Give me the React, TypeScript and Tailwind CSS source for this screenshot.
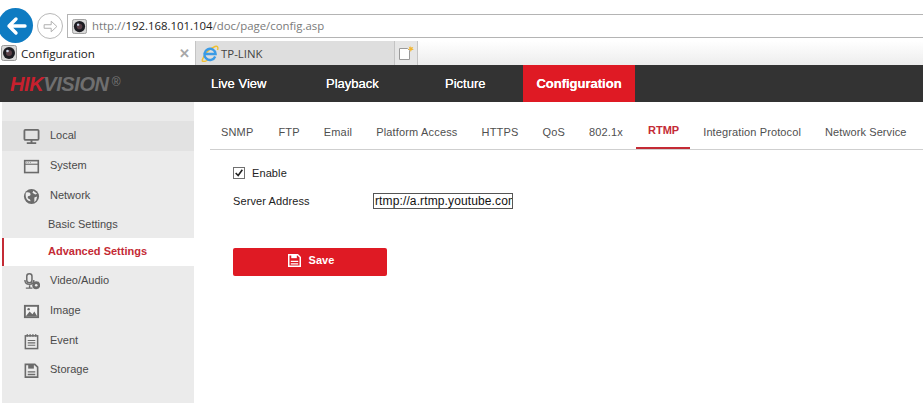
import React from 'react';

const font = { arial: "font-['Liberation_Sans',Arial,sans-serif]" };

const CamIcon: React.FC<{ className?: string }> = ({ className }) => (
  <svg viewBox="0 0 16 16" className={className}>
    <rect x="0.5" y="0.5" width="15" height="15" rx="2" fill="#d8d8d8" stroke="#9a9a9a" />
    <circle cx="8" cy="8" r="6" fill="#1c1c22" />
    <circle cx="8" cy="8" r="3" fill="#5a4048" />
    <circle cx="6.5" cy="6" r="1.3" fill="#c9d3e6" />
  </svg>
);

const IeIcon: React.FC = () => (
  <svg viewBox="0 0 18 18" className="h-[18px] w-[18px]">
    <path d="M1 16.5C3 10.5 8 5 14 2.5c2.5-1 3.5 1 2.5 3.5" fill="none" stroke="#f0c030" strokeWidth="1.4" />
    <path d="M1 16.5c1 1.5 3.5 1 6-0.5" fill="none" stroke="#f0c030" strokeWidth="1.4" />
    <path d="M14.2 12.5a5.6 5.6 0 1 1 .4-2.5H4" fill="none" stroke="#3a9be6" strokeWidth="2.4" />
  </svg>
);

const NewTabIcon: React.FC = () => (
  <svg viewBox="0 0 16 16" className="h-4 w-4">
    <path d="M1.5 3.5h8l2 2v9h-10z" fill="#fff" stroke="#9a9a9a" />
    <path d="M12.5 0.5l.8 2 2-.6-1 1.8 1.6 1.2-2.2.2-.9 1.9-.8-2-2-.2 1.5-1.3-.8-1.9 1.9.8z" fill="#f2b632" />
  </svg>
);

const BrowserBar: React.FC = () => (
  <div className="h-[65px] bg-white">
    <div className="flex h-[41px] items-start">
      <div className="relative z-10 ml-[-2px] mt-[8px] flex h-[35px] w-[35px] shrink-0 items-center justify-center rounded-full bg-[#0e7bc2]">
        <svg viewBox="0 0 24 24" className="h-6 w-6" fill="none" stroke="#fff" strokeWidth="3.4" strokeLinecap="round" strokeLinejoin="round">
          <path d="M21 12H5M12 5l-7 7 7 7" />
        </svg>
      </div>
      <div className="ml-[4px] mt-[13px] flex h-[26px] w-[26px] shrink-0 items-center justify-center rounded-full border border-[#b8b8b8]">
        <svg viewBox="0 0 24 24" className="h-[17px] w-[17px]" fill="none" stroke="#b0b0b0" strokeWidth="1.4" strokeLinejoin="round">
          <path d="M3 9.5h10V4.5L21 12l-8 7.5v-5H3z" />
        </svg>
      </div>
      <div className="ml-[4px] mt-[14px] flex h-[24px] flex-1 items-center border-y border-l border-[#b4b4b4] pl-[4px]">
        <CamIcon className="h-[15px] w-[15px]" />
        <span className="ml-[5px] font-['Open_Sans',sans-serif] text-[11.4px] text-[#7a7a7a]">
          http://<span className="text-[#222]">192.168.101.104</span>/doc/page/config.asp
        </span>
      </div>
    </div>
    <div className="flex h-[24px] bg-gradient-to-b from-white to-[#ededed]">
      <div className="flex w-[195px] items-center bg-white pl-[1px]">
        <CamIcon className="h-4 w-4" />
        <span className="ml-[4px] mt-[2px] flex-1 font-['Open_Sans',sans-serif] text-[11.6px] text-[#222]">Configuration</span>
        <span className="mr-[5px] text-[13px] font-bold leading-none text-[#a8a8a8]">✕</span>
      </div>
      <div className="flex w-[200px] items-center border-x border-[#c4c4c4] bg-[#dedede] pl-[5px]">
        <IeIcon />
        <span className="ml-[2px] mt-[2px] font-['Open_Sans',sans-serif] text-[11.4px] text-[#444]">TP-LINK</span>
      </div>
      <div className="flex w-[23px] items-center justify-center border-r border-[#c4c4c4] bg-[#e6e6e6]">
        <NewTabIcon />
      </div>
    </div>
  </div>
);

const TopNav: React.FC = () => (
  <div className={`flex h-[37px] items-center bg-[#333333] ${font.arial}`}>
    <div className="flex w-[196px] items-start pl-[10px] text-[20px] font-bold italic tracking-[-0.4px]">
      <span className="text-[#c8202e]">HIK</span>
      <span className="text-[#6f6f6f]">VISION</span>
      <span className="ml-[3px] text-[12px] font-normal not-italic leading-[26px] text-[#777]">®</span>
    </div>
    <div className="flex h-full text-[13px] text-white [text-shadow:0_0_0.5px_#fff]">
      <div className="flex w-[115px] items-center pl-[15px]">Live View</div>
      <div className="flex w-[119px] items-center pl-[15px]">Playback</div>
      <div className="flex w-[93px] items-center pl-[15px]">Picture</div>
      <div className="flex w-[112px] items-center justify-center bg-[#df1a24] font-bold">Configuration</div>
    </div>
  </div>
);

const stroke = { fill: 'none', stroke: '#6b6b6b', strokeWidth: 1.6 };

const icons: Record<string, React.ReactNode> = {
  Local: (
    <g {...stroke}>
      <rect x="1.5" y="2" width="15" height="10.5" rx="1" strokeWidth="1.9" />
      <path d="M9 12.5v3M4 16h10" strokeWidth="2" />
    </g>
  ),
  System: (
    <g>
      <rect x="1.8" y="2.8" width="14.4" height="12.6" fill="none" stroke="#6b6b6b" strokeWidth="1.7" />
      <path d="M2 6.6h14" stroke="#6b6b6b" strokeWidth="1.2" />
      <path d="M3.5 4.8h1M5.5 4.8h1M7.5 4.8h1" stroke="#999" strokeWidth="1" />
    </g>
  ),
  Network: (
    <g>
      <circle cx="9" cy="9" r="8" fill="#6b6b6b" />
      <path d="M3 5c3-1 5 0 5 2s-3 1-3 3 3 1 3 4c-3 0-6-3-5-9zM11 3l4 3-2 1-3-2zM12 10l3-1-1 4-2 2z" fill="#ebebeb" />
    </g>
  ),
  'Video/Audio': (
    <g>
      <rect x="4" y="0.8" width="5.5" height="9.5" rx="2.7" fill="none" stroke="#6b6b6b" strokeWidth="1.6" />
      <path d="M2 7.5c0 6 9.5 6 9.5 0M7 13v2.5M3 16h7" fill="none" stroke="#6b6b6b" strokeWidth="1.5" />
      <circle cx="14" cy="13" r="4.2" fill="#6b6b6b" />
      <circle cx="14" cy="13" r="1.4" fill="#ebebeb" />
    </g>
  ),
  Image: (
    <g>
      <rect x="2" y="3" width="14" height="12" fill="#f3f3f3" stroke="#6b6b6b" strokeWidth="2" />
      <path d="M3 14l4-5 3 3 2-3 3 5z" fill="#6b6b6b" />
      <circle cx="6" cy="6.5" r="1.3" fill="#6b6b6b" />
    </g>
  ),
  Event: (
    <g {...stroke}>
      <rect x="2.5" y="3" width="13" height="13.5" />
      <path d="M4.5 1v3M7.5 1v3M10.5 1v3M13.5 1v3" strokeWidth="1.2" />
      <path d="M5 8h8M5 10.5h8M5 13h8" strokeWidth="1.2" />
    </g>
  ),
  Storage: (
    <g>
      <path d="M2.5 2.5h10l3 3v10.5h-13z" fill="none" stroke="#6b6b6b" strokeWidth="1.7" />
      <path d="M5.5 3h6v4h-6z" fill="#6b6b6b" />
      <path d="M5 10.5h8M5 13.2h8" stroke="#6b6b6b" strokeWidth="1.4" />
    </g>
  ),
};

const MenuRow: React.FC<{ label: string; active?: boolean; short?: boolean }> = ({ label, active, short }) => (
  <div className={`flex ${short ? 'h-[29px]' : 'h-[30px]'} items-center pb-[2px] pl-[21px] ${active ? 'bg-[#e2e2e2]' : ''}`}>
    <svg viewBox="0 0 18 18" className="mt-[2px] h-[17px] w-[17px] shrink-0">
      {icons[label]}
    </svg>
    <span className="ml-[10px] text-[11px] text-[#4a4a4a]">{label}</span>
  </div>
);

const Sidebar: React.FC = () => (
  <div className={`ml-[2px] flex w-[192px] flex-col ${font.arial}`}>
    <div className="h-[19px] bg-[#ebebeb]" />
    <div className="bg-[#ebebeb]">
      <MenuRow label="Local" active />
      <MenuRow label="System" />
      <MenuRow label="Network" />
      <div className="flex h-[27px] items-center pl-[46px] text-[11px] text-[#4a4a4a]">Basic Settings</div>
    </div>
    <div className="flex h-[28px] items-center border-l-2 border-[#c42b35] bg-white pb-[2px] pl-[44px] text-[11px] font-bold text-[#c42b35]">
      Advanced Settings
    </div>
    <div className="flex-1 bg-[#ebebeb]">
      <MenuRow label="Video/Audio" />
      <MenuRow label="Image" />
      <MenuRow label="Event" />
      <MenuRow label="Storage" short />
    </div>
  </div>
);

const tabs = [
  { label: 'SNMP', extra: 'pr-[1px]' },
  { label: 'FTP', extra: '' },
  { label: 'Email', extra: '' },
  { label: 'Platform Access', extra: '' },
  { label: 'HTTPS', extra: '' },
  { label: 'QoS', extra: '' },
  { label: '802.1x', extra: '' },
  { label: 'RTMP', extra: '' },
  { label: 'Integration Protocol', extra: 'tracking-[0.12px]' },
  { label: 'Network Service', extra: 'tracking-[0.1px]' },
];

const Content: React.FC = () => (
  <div className={`flex-1 ${font.arial}`}>
    <div className="mt-[19px] ml-[16px] flex h-[29px] gap-[24px] border-b border-[#cfcfcf] pl-[11px] text-[11px] tracking-[0.17px]">
      {tabs.map((t) =>
        t.label === 'RTMP' ? (
          <div key={t.label} className="mx-[-11px] flex h-[28px] items-start border-b-2 border-[#c42b35] pl-[12px] pr-[11px] pt-[1px] font-bold tracking-normal text-[#c42b35]">
            {t.label}
          </div>
        ) : (
          <div key={t.label} className={`flex h-[22px] items-center text-[#4f4f4f] ${t.extra}`}>
            {t.label}
          </div>
        ),
      )}
    </div>
    <div className="ml-[39px] text-[11px] tracking-[0.1px] text-[#222]">
      <div className="mt-[16px] flex h-[14px] items-center">
        <div className="flex h-[12px] w-[12px] items-center justify-center border border-[#707070] bg-white">
          <svg viewBox="0 0 12 12" className="h-[10px] w-[10px]" fill="none" stroke="#222" strokeWidth="1.9">
            <path d="M2 6l3 3 5-7" />
          </svg>
        </div>
        <span className="ml-[7px]">Enable</span>
      </div>
      <div className="mt-[13px] flex h-[16px] items-center">
        <span className="w-[140px]">Server Address</span>
        <input
          readOnly
          value="rtmp://a.rtmp.youtube.com/live2"
          className="h-[16px] w-[140px] border border-[#555] bg-white pl-[1px] text-[12px] tracking-[0.12px] text-[#111] outline-none"
        />
      </div>
      <button className="mt-[39px] flex h-[28px] w-[154px] items-center justify-center rounded-[2px] bg-[#df1a24] pb-[3px] pl-[3px] text-[11px] font-bold text-white">
        <svg viewBox="0 0 14 14" className="h-[13px] w-[13px]">
          <path d="M0.8 0.8h9.6l2.8 2.8v9.6H0.8z" fill="none" stroke="#fff" strokeWidth="1.6" />
          <path d="M3.5 1h6v3.5h-6z" fill="#fff" />
          <path d="M3 8h8M3 10.6h8" stroke="#fff" strokeWidth="1.3" />
        </svg>
        <span className="ml-[7px]">Save</span>
      </button>
    </div>
  </div>
);

const App: React.FC = () => {
  return (
    <div className="flex h-[403px] w-[923px] flex-col overflow-hidden bg-white">
      <BrowserBar />
      <TopNav />
      <div className="flex flex-1">
        <Sidebar />
        <Content />
      </div>
    </div>
  );
};

export default App;
